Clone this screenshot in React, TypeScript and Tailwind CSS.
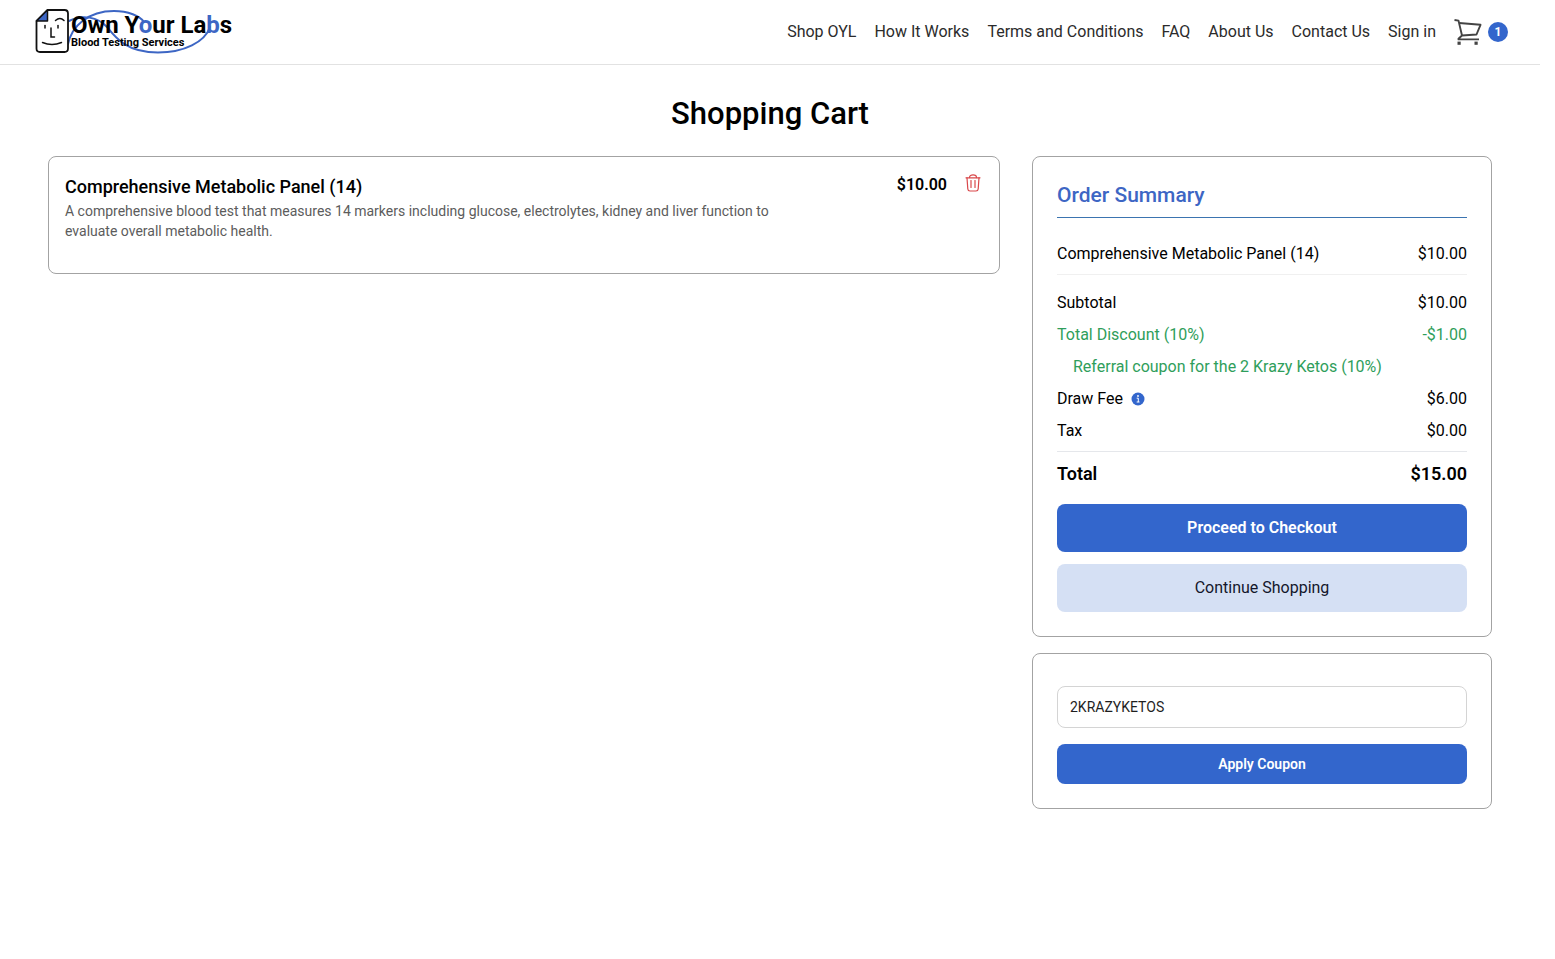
import { useState } from "react";

const navItems = [
  "Shop OYL",
  "How It Works",
  "Terms and Conditions",
  "FAQ",
  "About Us",
  "Contact Us",
  "Sign in",
];

function Logo() {
  return (
    <a href="#home" aria-label="Own Your Labs home" className="block">
      <svg width="200" height="48" viewBox="32 8 200 48" fill="none">
        <g stroke="#3d66c4" strokeWidth="2" strokeLinecap="round">
          <path d="M68 44C72 26 88 11 114 11C128 11 140 16 144 22" />
          <path d="M69 21C82 14 98 17 107 27C115 37 126 52.500 158 52.500C184 52.500 205 42 210 27" />
        </g>
        <path
          d="M47.500 10H64.500Q68 10 68 13.500V48.500Q68 52 64.500 52H40Q36.500 52 36.500 48.500V21Z"
          fill="#fff"
          stroke="#111"
          strokeWidth="1.800"
          strokeLinejoin="round"
        />
        <path d="M47.500 10V21H36.500Z" fill="#3d66c4" stroke="#111" strokeWidth="1.500" strokeLinejoin="round" />
        <g stroke="#111" strokeWidth="1.500" strokeLinecap="round">
          <path d="M45 25.500V28" />
          <path d="M58 25.500V28" />
          <path d="M55.500 20.500Q60 16.500 64 20.500" />
          <path d="M51 28V37H54.500" />
          <path d="M42.500 42.500Q52 46.500 61.500 42.500" />
        </g>
        <text x="71" y="33" fontSize="24" fontWeight="700" fill="#000" fontFamily="Roboto, sans-serif">
          Own Y<tspan fill="#3d66c4">o</tspan>ur La<tspan fill="#3d66c4">b</tspan>s
        </text>
        <text x="71" y="46" fontSize="11" fontWeight="700" fill="#000" fontFamily="Roboto, sans-serif">
          Blood Testing Services
        </text>
      </svg>
    </a>
  );
}

function CartIcon() {
  return (
    <svg width="28" height="28" viewBox="0 0 28 28" fill="none" stroke="#444" strokeWidth="1.900" strokeLinejoin="round">
      <path d="M0.500 2L4.500 2.600L8 17.500" />
      <path d="M5.200 5L26.500 6.800L22.500 16.500L8 17.500L4.500 20.800V21.400H25" />
      <rect x="3.500" y="23.600" width="3.200" height="3.200" fill="#444" stroke="none" />
      <rect x="20.500" y="23.600" width="3.200" height="3.200" fill="#444" stroke="none" />
    </svg>
  );
}

function TrashIcon() {
  return (
    <svg width="20" height="20" viewBox="0 0 20 20" fill="none" stroke="#d9484b" strokeWidth="1.200" strokeLinecap="round" strokeLinejoin="round">
      <path d="M3 4.800H17" />
      <path d="M6.500 4.600C6.500 1 13.500 1 13.500 4.600" />
      <path d="M4 4.800L4.800 16Q5 18 7 18H13Q15 18 15.200 16L16 4.800" />
      <path d="M8 7.500V14.500" />
      <path d="M12 7.500V14.500" />
    </svg>
  );
}

function InfoIcon() {
  return (
    <svg width="14" height="14" viewBox="0 0 14 14">
      <circle cx="7" cy="7" r="6.500" fill="#3366cc" />
      <circle cx="7" cy="4" r="0.900" fill="#fff" />
      <path d="M5.700 6.200H7.300V10M5.700 10H8.500" stroke="#fff" strokeWidth="1" fill="none" />
    </svg>
  );
}

export default function App() {
  const [coupon, setCoupon] = useState("2KRAZYKETOS");

  return (
    <div className="min-h-screen bg-white pr-[15px] font-['Roboto',sans-serif] text-base text-black">
      <header className="flex h-16 items-center justify-between px-8 shadow-[0_1px_0_#e2e2e2]">
        <Logo />
        <nav className="flex items-center gap-[18px] text-[#2b2b2b]">
          {navItems.map((item) => (
            <a key={item} href="#nav">
              {item}
            </a>
          ))}
          <a href="#cart" aria-label="Cart" className="flex items-center gap-1.5">
            <CartIcon />
            <span className="flex size-5 items-center justify-center rounded-full bg-[#3366cc] text-xs font-bold text-white">
              1
            </span>
          </a>
        </nav>
      </header>

      <main className="px-12 py-8">
        <h1 className="mb-6 text-center text-[31px]/9 font-medium">Shopping Cart</h1>
        <div className="grid grid-cols-3 items-start gap-8">
          <section className="col-span-2 flex items-start justify-between rounded-lg border border-[#a3a3a3] p-4">
            <div className="w-4/5 pb-4">
              <h2 className="text-lg font-medium">Comprehensive Metabolic Panel (14)</h2>
              <p className="text-sm text-[#5c5c5c]">
                A comprehensive blood test that measures 14 markers including glucose, electrolytes, kidney and liver
                function to evaluate overall metabolic health.
              </p>
            </div>
            <div className="flex items-start gap-4">
              <span className="font-semibold">$10.00</span>
              <button type="button" aria-label="Remove item">
                <TrashIcon />
              </button>
            </div>
          </section>

          <div className="flex flex-col gap-4">
            <section className="rounded-lg border border-[#a3a3a3] p-6">
              <h2 className="mb-6 border-b border-[#3b74b0] pb-2 text-[21px]/7 font-medium text-[#3d66c4]">
                Order Summary
              </h2>
              <div className="mb-4 flex justify-between border-b border-[#f0f0f0] pb-2">
                <span>Comprehensive Metabolic Panel (14)</span>
                <span>$10.00</span>
              </div>
              <div className="flex flex-col gap-2">
                <div className="flex justify-between">
                  <span>Subtotal</span>
                  <span>$10.00</span>
                </div>
                <div className="flex justify-between text-[#2f9e5b]">
                  <span>Total Discount (10%)</span>
                  <span>-$1.00</span>
                </div>
                <div className="pl-4 text-[#2f9e5b]">Referral coupon for the 2 Krazy Ketos (10%)</div>
                <div className="flex justify-between">
                  <span className="flex items-center gap-2">
                    Draw Fee
                    <button type="button" aria-label="About the draw fee">
                      <InfoIcon />
                    </button>
                  </span>
                  <span>$6.00</span>
                </div>
                <div className="flex justify-between">
                  <span>Tax</span>
                  <span>$0.00</span>
                </div>
                <div className="flex justify-between border-t border-[#e5e7eb] pt-2 text-lg font-semibold">
                  <span>Total</span>
                  <span>$15.00</span>
                </div>
              </div>
              <button type="button" className="mt-4 h-12 w-full rounded-lg bg-[#3366cc] font-semibold text-white">
                Proceed to Checkout
              </button>
              <button type="button" className="mt-3 h-12 w-full rounded-lg bg-[#d5e0f4] text-[#14172b]">
                Continue Shopping
              </button>
            </section>

            <form
              className="flex flex-col gap-4 rounded-lg border border-[#a3a3a3] p-6 pt-8"
              onSubmit={(event) => event.preventDefault()}
            >
              <input
                type="text"
                aria-label="Coupon code"
                value={coupon}
                onChange={(event) => setCoupon(event.target.value)}
                className="h-[42px] w-full rounded-lg border border-[#d4d4d4] px-3 text-sm text-[#1f1f1f]"
              />
              <button type="submit" className="h-10 w-full rounded-lg bg-[#3366cc] text-sm font-semibold text-white">
                Apply Coupon
              </button>
            </form>
          </div>
        </div>
      </main>
    </div>
  );
}
